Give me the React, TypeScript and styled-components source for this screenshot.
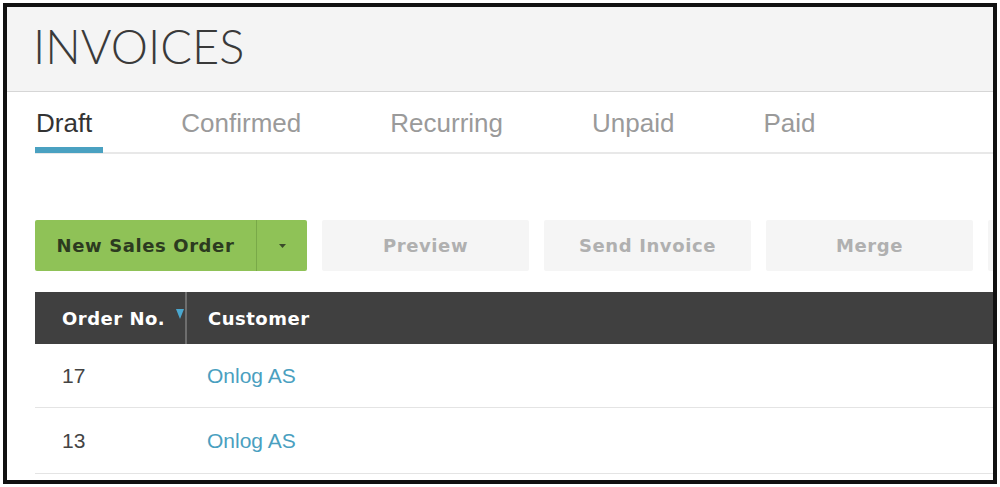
import React from "react";
import styled, { createGlobalStyle } from "styled-components";

const GlobalStyle = createGlobalStyle`
    html, body {
        margin: 0;
        padding: 0;
        background: #fff;
    }
    * {
        box-sizing: border-box;
    }
`;

const Frame = styled.div`
    margin: 3px;
    width: 994px;
    height: 481px;
    border: 4px solid #111;
    overflow: hidden;
    background: #fff;
    display: flex;
    flex-direction: column;
`;

const TitleBar = styled.div`
    height: 85px;
    flex-shrink: 0;
    background: #f4f4f4;
    border-bottom: 1px solid #d6d6d6;
    display: flex;
    align-items: center;
    padding: 0 0 7px 26px;
`;

const Title = styled.h1`
    margin: 0;
    font-family: Lato, "Open Sans", sans-serif;
    font-weight: 300;
    font-size: 47px;
    letter-spacing: 0;
    color: #3a3a3a;
`;

const Content = styled.div`
    padding-left: 28px;
    display: flex;
    flex-direction: column;
`;

const TabBar = styled.div`
    display: flex;
    gap: 77px;
    height: 62px;
    border-bottom: 2px solid #e8e8e8;
    white-space: nowrap;
`;

const Tab = styled.div<{ $active?: boolean }>`
    position: relative;
    padding: 16px 11px 0 1px;
    font-family: "Liberation Sans", Arial, sans-serif;
    font-size: 26px;
    color: ${(p) => (p.$active ? "#333" : "#9a9a9a")};

    &::after {
        content: "";
        display: ${(p) => (p.$active ? "block" : "none")};
        position: absolute;
        left: 0;
        right: 0;
        bottom: -1px;
        height: 6px;
        background: #4aa1c1;
    }
`;

const Toolbar = styled.div`
    display: flex;
    gap: 15px;
    margin-top: 66px;
    height: 51px;
`;

const SplitButton = styled.div`
    display: flex;
    width: 272px;
    flex-shrink: 0;
    background: #8fc257;
    border-radius: 2px;
`;

const MainAction = styled.div`
    flex: 1;
    display: flex;
    align-items: center;
    justify-content: center;
    font-family: "DejaVu Sans", Verdana, sans-serif;
    font-weight: bold;
    font-size: 18px;
    letter-spacing: 0.6px;
    color: #2c3a20;
    border-right: 1px solid #79a948;
    white-space: nowrap;
`;

const Caret = styled.div`
    width: 50px;
    display: flex;
    align-items: center;
    justify-content: center;
`;

const GhostButton = styled.div`
    width: 207px;
    flex-shrink: 0;
    display: flex;
    align-items: center;
    justify-content: center;
    background: #f5f5f5;
    border-radius: 2px;
    font-family: "DejaVu Sans", Verdana, sans-serif;
    font-weight: bold;
    font-size: 18px;
    letter-spacing: 0.6px;
    color: #b0b0b0;
    white-space: nowrap;
`;

const Table = styled.div`
    margin-top: 21px;
    display: grid;
    grid-template-columns: 150px 1fr;
`;

const HeadCell = styled.div<{ $divider?: boolean }>`
    height: 52px;
    background: #404040;
    display: flex;
    align-items: center;
    padding-left: ${(p) => (p.$divider ? "21px" : "27px")};
    border-left: ${(p) => (p.$divider ? "2px solid #6e6e6e" : "none")};
    font-family: "DejaVu Sans", Verdana, sans-serif;
    font-weight: bold;
    font-size: 18px;
    letter-spacing: 0.5px;
    color: #fff;
    white-space: nowrap;
`;

const SortArrow = styled.span`
    width: 0;
    height: 0;
    margin: 0 0 8px 11px;
    border-left: 4px solid transparent;
    border-right: 4px solid transparent;
    border-top: 10px solid #4aa7cf;
`;

const Cell = styled.div<{ $link?: boolean }>`
    display: flex;
    align-items: center;
    padding-left: ${(p) => (p.$link ? "22px" : "27px")};
    border-bottom: 1px solid #e4e4e4;
    font-family: "Liberation Sans", Arial, sans-serif;
    font-size: 21px;
    color: ${(p) => (p.$link ? "#4a9fc0" : "#444")};
`;

const Row = styled.div<{ $height: number }>`
    display: contents;
    & > div {
        height: ${(p) => p.$height}px;
    }
`;

const tabs = ["Draft", "Confirmed", "Recurring", "Unpaid", "Paid"];
const actions = ["Preview", "Send Invoice", "Merge", ""];
const rows = [
    { no: "17", customer: "Onlog AS", h: 64 },
    { no: "13", customer: "Onlog AS", h: 66 },
];

export default function App() {
    return (
        <>
            <GlobalStyle />
            <Frame>
                <TitleBar>
                    <Title>INVOICES</Title>
                </TitleBar>
                <Content>
                    <TabBar>
                        {tabs.map((t, i) => (
                            <Tab key={t} $active={i === 0}>
                                {t}
                            </Tab>
                        ))}
                    </TabBar>
                    <Toolbar>
                        <SplitButton>
                            <MainAction>New Sales Order</MainAction>
                            <Caret>
                                <svg width="7" height="4" viewBox="0 0 7 4">
                                    <path d="M0 0h7L3.5 4z" fill="#3a4a2a" />
                                </svg>
                            </Caret>
                        </SplitButton>
                        {actions.map((a, i) => (
                            <GhostButton key={i}>{a}</GhostButton>
                        ))}
                    </Toolbar>
                    <Table>
                        <HeadCell>
                            Order No.
                            <SortArrow />
                        </HeadCell>
                        <HeadCell $divider>Customer</HeadCell>
                        {rows.map((r) => (
                            <Row key={r.no} $height={r.h}>
                                <Cell>{r.no}</Cell>
                                <Cell $link>{r.customer}</Cell>
                            </Row>
                        ))}
                    </Table>
                </Content>
            </Frame>
        </>
    );
}
